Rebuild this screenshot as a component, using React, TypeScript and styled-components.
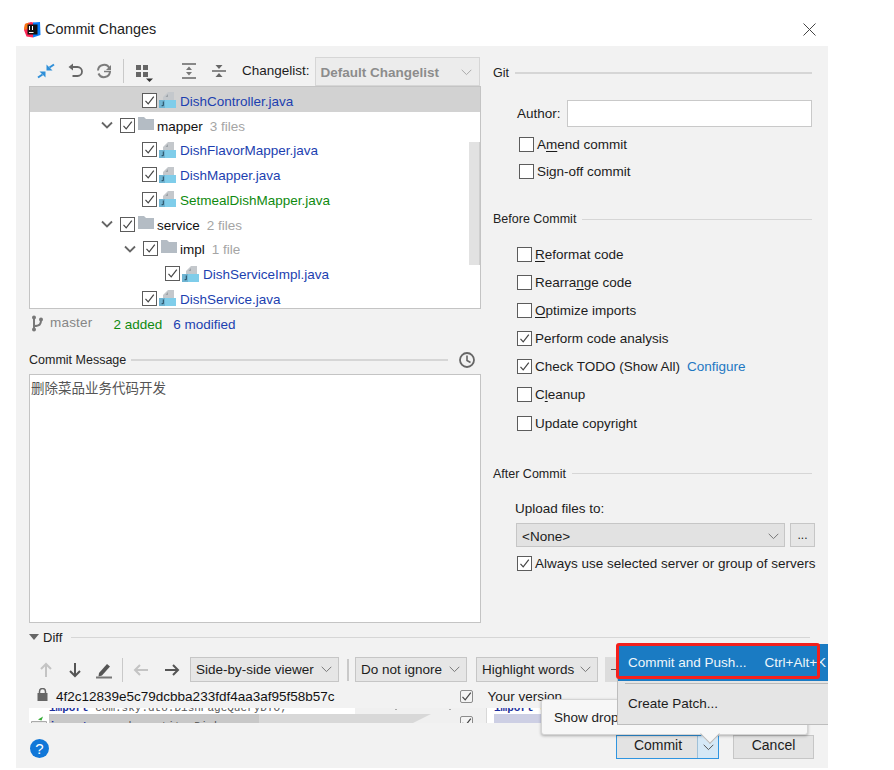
import React from "react";
import styled, { createGlobalStyle } from "styled-components";

const Global = createGlobalStyle`
  html, body { margin: 0; padding: 0; background: #fff; }
  body { font-family: "Liberation Sans", Arial, sans-serif; font-size: 13px; color: #1c1c1c; }
  * { box-sizing: border-box; }
`;

const Page = styled.div`
  width: 894px;
  height: 770px;
  background: #fff;
  padding-left: 16px;
  overflow: hidden;
`;
const Dialog = styled.div`
  position: relative;
  width: 812px;
  height: 768px;
  overflow: hidden;
`;
const TitleBar = styled.div`
  height: 46px;
  display: flex;
  align-items: center;
  padding: 12px 12px 0 8px;
  gap: 4px;
  background: #fff;
`;
const TitleText = styled.div`
  flex: 1;
  font-size: 14.4px;
  color: #222;
`;
const Body = styled.div`
  height: 722px;
  background: #f2f2f2;
  display: flex;
  flex-direction: column;
`;
const Main = styled.div`
  height: 582px;
  display: grid;
  grid-template-columns: 452px 323px;
  column-gap: 12px;
  padding-left: 13px;
`;
const LeftCol = styled.div`
  display: flex;
  flex-direction: column;
  padding-top: 10px;
`;
const ToolBar = styled.div`
  height: 30px;
  display: flex;
  align-items: center;
  padding-left: 8px;
`;
const ToolIcon = styled.svg<{ $ml?: number }>`
  width: 18px;
  height: 18px;
  margin-left: ${(p) => p.$ml ?? 0}px;
  flex: none;
  overflow: visible;
`;
const VSep = styled.div<{ $ml: number; $mr: number; $h?: number; $w?: number }>`
  width: ${(p) => p.$w ?? 1}px;
  height: ${(p) => p.$h ?? 24}px;
  background: #c9c9c9;
  margin: 0 ${(p) => p.$mr}px 0 ${(p) => p.$ml}px;
  flex: none;
`;
const ChangeLabel = styled.span`
  margin-left: 14px;
  margin-top: -2px;
  font-size: 13.5px;
  white-space: nowrap;
`;
const DisabledCombo = styled.div`
  margin-left: 5px;
  width: 165px;
  height: 29px;
  border: 1px solid #d6d6d6;
  background: #ececec;
  display: flex;
  align-items: center;
  justify-content: space-between;
  padding: 2px 7px 0 5px;
  font-weight: bold;
  color: #8c8c8c;
  font-size: 13.5px;
`;
const Tree = styled.div`
  position: relative;
  height: 223px;
  background: #fff;
  border: 1px solid #c4c4c4;
  overflow: hidden;
`;
const Row = styled.div<{ $depth: number; $selected?: boolean }>`
  height: 24.75px;
  display: flex;
  align-items: center;
  padding: 2px 0 0 ${(p) => p.$depth}px;
  background: ${(p) => (p.$selected ? "#d2d2d2" : "transparent")};
  font-size: 13.5px;
  white-space: nowrap;
`;
const Chevron = styled.svg`
  width: 12px;
  height: 8px;
  margin-right: 7px;
  flex: none;
`;
const Box = styled.span`
  width: 15px;
  height: 15px;
  border: 1px solid #5c5c5c;
  background: #fff;
  display: inline-flex;
  align-items: center;
  justify-content: center;
  flex: none;
`;
const FileName = styled.span<{ $color: string }>`
  color: ${(p) => p.$color};
  margin-left: 4px;
  margin-top: 2px;
`;
const FolderName = styled.span`
  color: #111;
  margin-left: 3px;
  margin-top: 2px;
`;
const Count = styled.span`
  color: #a5a5a5;
  margin-left: 7px;
  margin-top: 2px;
`;
const Scroll = styled.div`
  position: absolute;
  right: 0;
  top: 55px;
  width: 11px;
  height: 123px;
  background: #e2e2e2;
  border-right: 1px solid #cfcfcf;
`;
const StatusRow = styled.div`
  height: 31px;
  display: flex;
  align-items: center;
  padding-left: 2px;
  font-size: 13.5px;
`;
const Branch = styled.span`
  color: #868686;
  margin-left: 6px;
  margin-top: -4px;
  letter-spacing: 0.2px;
`;
const Added = styled.span`
  color: #0f8a0f;
  margin-left: 21px;
`;
const Modified = styled.span`
  color: #1c3fb0;
  margin-left: 11px;
`;
const SectionHead = styled.div`
  display: flex;
  align-items: center;
  gap: 6px;
  font-size: 12.5px;
  color: #222;
`;
const RightHead = styled(SectionHead)<{ $mt?: number }>`
  margin-top: ${(p) => p.$mt ?? 0}px;
  padding-right: 4px;
`;
const Line = styled.div<{ $c?: string; $h?: number }>`
  flex: 1;
  height: ${(p) => p.$h ?? 1}px;
  background: ${(p) => p.$c ?? "#d6d6d6"};
`;
const MessageHead = styled(SectionHead)`
  margin-top: 10px;
  height: 19px;
  gap: 5px;
  padding-right: 5px;
`;
const MessageBox = styled.div`
  margin-top: 5px;
  height: 249px;
  background: #fff;
  border: 1px solid #c4c4c4;
  padding: 0 0 0 1px;
  font-family: "Noto Sans CJK SC", "Liberation Serif", serif;
  font-size: 13.5px;
  line-height: 24px;
  color: #555;
`;
const RightCol = styled.div`
  display: flex;
  flex-direction: column;
  padding-top: 20px;
`;
const Author = styled.div`
  display: flex;
  align-items: center;
  gap: 6px;
  margin: 20px 4px 0 24px;
  height: 27px;
  font-size: 13.5px;
`;
const AuthorInput = styled.div`
  flex: 1;
  height: 27px;
  background: #fff;
  border: 1px solid #c9c9c9;
`;
const CheckGroup = styled.div<{ $gap: number; $mt: number; $pl: number }>`
  display: flex;
  flex-direction: column;
  gap: ${(p) => p.$gap}px;
  margin-top: ${(p) => p.$mt}px;
  padding-left: ${(p) => p.$pl}px;
`;
const CheckRow = styled.div`
  height: 15px;
  display: flex;
  align-items: center;
  gap: 3px;
  font-size: 13.5px;
  white-space: nowrap;
  color: #1c1c1c;
`;
const Link = styled.span`
  color: #1e78c2;
  margin-left: 7px;
`;
const Under = styled.u`
  text-underline-offset: 2px;
`;
const Upload = styled.div`
  margin: 20px 0 0 22px;
  font-size: 13.5px;
  height: 16px;
`;
const SelectRow = styled.div`
  display: flex;
  gap: 5px;
  margin: 6px 0 0 23px;
  height: 24px;
`;
const Select = styled.div`
  width: 269px;
  background: #e2e2e2;
  border: 1px solid #c6c6c6;
  display: flex;
  align-items: center;
  justify-content: space-between;
  padding: 3px 5px 0 5px;
  font-size: 13.5px;
`;
const Dots = styled.div`
  width: 25px;
  background: #e6e6e6;
  border: 1px solid #c6c6c6;
  text-align: center;
  font-size: 12px;
  line-height: 23px;
`;
const DiffArea = styled.div`
  height: 97px;
  padding-left: 13px;
  display: flex;
  flex-direction: column;
`;
const DiffHead = styled(SectionHead)`
  height: 18px;
  margin-right: 18px;
  gap: 9px;
  font-size: 13px;
`;
const DiffTools = styled.div`
  display: flex;
  align-items: center;
  height: 25px;
  margin-top: 11px;
  padding-left: 8px;
`;
const ViewCombo = styled.div<{ $w: number; $ml: number }>`
  width: ${(p) => p.$w}px;
  margin-left: ${(p) => p.$ml}px;
  height: 25px;
  flex: none;
  background: #e6e6e6;
  border: 1px solid #c6c6c6;
  display: flex;
  align-items: center;
  justify-content: space-between;
  padding: 0 6px 0 5px;
  font-size: 13.5px;
  white-space: nowrap;
`;
const MinusButton = styled.div`
  width: 30px;
  height: 25px;
  margin-left: 7px;
  flex: none;
  background: #dcdcdc;
  padding: 12px 0 0 6px;
  &::before {
    content: "";
    display: block;
    width: 8px;
    height: 1px;
    background: #555;
  }
`;
const HashRow = styled.div`
  display: flex;
  align-items: center;
  height: 26px;
  padding: 3px 0 0 8px;
`;
const Hash = styled.span`
  margin-left: 8px;
  font-size: 13.5px;
  color: #111;
`;
const VersionLabel = styled.span`
  margin-left: 15px;
  font-size: 13.5px;
`;
const HashCheck = styled.span`
  margin-left: 125px;
  width: 13px;
  height: 13px;
  border: 1px solid #8c8c8c;
  border-radius: 2px;
  background: #f4f4f4;
  display: inline-flex;
  align-items: center;
  justify-content: center;
  flex: none;
`;
const CodeStrip = styled.div`
  height: 15px;
  overflow: hidden;
  display: grid;
  grid-template-columns: 20px 306px 132px 7px 1fr;
  background: #f2f2f2;
`;
const Gutter = styled.div`
  background: #fff;
  display: flex;
  align-items: flex-end;
`;
const Cell = styled.div<{ $c: string }>`
  background: ${(p) => p.$c};
  font-family: "Liberation Mono", monospace;
  font-size: 11px;
  line-height: 18px;
  overflow: hidden;
  color: #555;
  white-space: nowrap;
`;
const CodeLines = styled.div`
  margin-top: -9px;
  b {
    color: #1c2f9c;
  }
`;
const Connector = styled.div`
  position: relative;
  background: #f0f0f0;
  border-right: 1px solid #d8d8d8;
`;
const StripCheck = styled(HashCheck)`
  position: absolute;
  left: 105px;
  top: 8px;
  margin: 0;
`;
const Footer = styled.div`
  height: 43px;
  display: flex;
  align-items: center;
  padding: 0 14px;
`;
const Help = styled.div`
  width: 19px;
  height: 19px;
  margin-top: 3px;
  border-radius: 50%;
  background: #1177d8;
  color: #fff;
  font-size: 15px;
  text-align: center;
  line-height: 19px;
`;
const FooterButtons = styled.div`
  margin-left: auto;
  display: flex;
  gap: 14px;
  margin-top: 1px;
`;
const SplitButton = styled.div`
  width: 103px;
  height: 24px;
  display: flex;
  background: #e3e3e3;
  border: 1px solid #2f95e0;
  font-size: 14px;
`;
const SplitMain = styled.div`
  flex: 1;
  padding-left: 2px;
  text-align: center;
  line-height: 18px;
`;
const SplitArrow = styled.div`
  width: 21px;
  background: #d5e8f6;
  border-left: 1px solid #9fc0d8;
  display: flex;
  align-items: center;
  justify-content: center;
`;
const Cancel = styled.div`
  width: 81px;
  height: 24px;
  background: #e3e3e3;
  border: 1px solid #c6c6c6;
  text-align: center;
  font-size: 14px;
  line-height: 18px;
`;
const Tooltip = styled.div`
  position: absolute;
  left: 525px;
  top: 699px;
  width: 267px;
  height: 36px;
  background: #f7f7f7;
  border: 1px solid #d4d4d4;
  border-radius: 3px;
  box-shadow: 0 1px 3px rgba(0, 0, 0, 0.3);
  padding: 10px 0 0 12px;
  font-size: 13.5px;
  &::after {
    content: "";
    position: absolute;
    left: 161px;
    bottom: -7px;
    width: 13px;
    height: 13px;
    background: #f7f7f7;
    transform: rotate(45deg);
    border-right: 1px solid #b8b8b8;
    border-bottom: 1px solid #b8b8b8;
  }
`;
const Menu = styled.div`
  position: absolute;
  left: 601px;
  top: 644px;
  width: 240px;
  height: 81px;
  background: #e5e5e5;
  border-left: 1px solid #bdbdbd;
  border-bottom: 1px solid #bdbdbd;
  font-size: 13.5px;
`;
const MenuActive = styled.div`
  height: 37px;
  background: #1a7bc3;
  color: #eef6fb;
  display: flex;
  align-items: center;
  padding-left: 10px;
  white-space: nowrap;
`;
const Shortcut = styled.span`
  margin-left: 18px;
`;
const MenuSep = styled.div`
  height: 1px;
  background: #b9b9b9;
  margin: 2px 0 0 7px;
`;
const MenuItem = styled.div`
  height: 38px;
  display: flex;
  align-items: center;
  padding-left: 10px;
`;
const RedMark = styled.div`
  position: absolute;
  left: 600px;
  top: 643px;
  width: 204px;
  height: 36px;
  border: 3px solid #f4201c;
  border-radius: 3px;
`;

const Check = () => (
  <svg width="11" height="11" viewBox="0 0 11 11">
    <path d="M1.5 5.8 4.2 8.8 9.8 1.6" fill="none" stroke="#444" strokeWidth="1.2" />
  </svg>
);
const CB = ({ on }: { on?: boolean }) => <Box>{on && <Check />}</Box>;

const Down = () => (
  <Chevron viewBox="0 0 12 8">
    <path d="M1 1.500 6 6.500 11 1.500" fill="none" stroke="#666" strokeWidth="1.800" />
  </Chevron>
);
const ComboArrow = ({ c = "#777" }: { c?: string }) => (
  <svg width="11" height="7" viewBox="0 0 11 7">
    <path d="M.7.800 5.500 5.600 10.300.800" fill="none" stroke={c} strokeWidth="1" />
  </svg>
);
const Folder = () => (
  <svg width="16" height="13" viewBox="0 0 16 13" style={{ marginTop: -4, marginLeft: 3, flex: "none" }}>
    <path d="M0 0h6l2 2h8v11H0z" fill="#b4bcc4" />
  </svg>
);
const JavaFile = () => (
  <svg width="17" height="16" viewBox="0 0 17 16" style={{ marginLeft: 2, flex: "none" }}>
    <path d="M9 0h6v8H4V5z" fill="#c4c8cc" />
    <path d="M9 2 6.500 5H9z" fill="#9da3a8" />
    <rect x="0" y="8" width="17" height="8" fill="#7fcdea" />
    <rect x="0" y="8" width="6" height="8" fill="#6fb4d2" />
    <path d="M4.300 9.500v4.200H2.600" fill="none" stroke="#23465a" strokeWidth="1" />
  </svg>
);
const FileRow = ({ depth, name, color, selected }: { depth: number; name: string; color: string; selected?: boolean }) => (
  <Row $depth={depth} $selected={selected}>
    <CB on />
    <JavaFile />
    <FileName $color={color}>{name}</FileName>
  </Row>
);
const FolderRow = ({ depth, name, count }: { depth: number; name: string; count: string }) => (
  <Row $depth={depth}>
    <Down />
    <CB on />
    <Folder />
    <FolderName>{name}</FolderName>
    <Count>{count}</Count>
  </Row>
);

const blue = "#1c3fb0";
const green = "#0f8a0f";

export default function App() {
  return (
    <Page>
      <Global />
      <Dialog>
        <TitleBar>
          <svg width="17" height="17" viewBox="0 0 17 17">
            <path d="M1 3 7 1 11 2 9 16.500 2.500 15.500 0 9z" fill="#fe2857" />
            <path d="M1 3 5 1.500 3 8 0 9z" fill="#f97a12" />
            <path d="M9 1.500 16 1 16.500 14 9 16.500z" fill="#087cfa" />
            <rect x="3.500" y="3.500" width="10" height="10" fill="#111" />
            <rect x="5" y="11" width="4.500" height="1" fill="#fff" />
            <rect x="5" y="5" width="1" height="4" fill="#fff" />
            <rect x="8" y="5" width="1" height="4" fill="#fff" />
          </svg>
          <TitleText>Commit Changes</TitleText>
          <svg width="13" height="13" viewBox="0 0 13 13">
            <path d="M.5.500l12 12M12.500.500l-12 12" stroke="#444" strokeWidth="1" fill="none" />
          </svg>
        </TitleBar>
        <Body>
          <Main>
            <LeftCol>
              <ToolBar>
                <ToolIcon viewBox="0 0 18 18">
                  <path d="M8.500 9.500H2.500L8.500 15.500z" fill="#2f8fd8" />
                  <path d="M5.500 12.500 1 15.500" stroke="#2f8fd8" strokeWidth="2" fill="none" />
                  <path d="M9.500 8.500H15.500L9.500 2.500z" fill="#2f8fd8" />
                  <path d="M12.500 5.500 17 2.500" stroke="#2f8fd8" strokeWidth="2" fill="none" />
                </ToolIcon>
                <ToolIcon $ml={12} viewBox="0 0 18 18">
                  <path d="M1.500 5 6 1.500v7z" fill="#666" />
                  <path d="M5 5h5.500a4.500 4.500 0 0 1 0 9H5.500" stroke="#666" strokeWidth="1.800" fill="none" />
                </ToolIcon>
                <ToolIcon $ml={10} viewBox="0 0 18 18">
                  <path d="M14.500 6.500A6 6 0 0 0 3 8.500" stroke="#7c7c7c" strokeWidth="2" fill="none" />
                  <path d="M3.500 11.500A6 6 0 0 0 15 9.500" stroke="#7c7c7c" strokeWidth="2" fill="none" />
                  <path d="M16 3v5h-5z" fill="#7c7c7c" />
                  <path d="M9 9.500h7" stroke="#7c7c7c" strokeWidth="1.500" />
                </ToolIcon>
                <VSep $ml={10} $mr={10} />
                <ToolIcon viewBox="0 0 18 18">
                  <path d="M2 3h5v5H2zM9 3h5v5H9zM2 10h5v5H2zM9 10h5v5H9z" fill="#666" />
                  <path d="M12 16.500h7l-3.500 3.500z" fill="#333" />
                </ToolIcon>
                <ToolIcon $ml={28} viewBox="0 0 18 18">
                  <path d="M2 2h14M2 16h14" stroke="#666" strokeWidth="1.500" fill="none" />
                  <path d="M9 4.500 12 8H6zM9 13.500 12 10H6z" fill="#777" />
                </ToolIcon>
                <ToolIcon $ml={12} viewBox="0 0 18 18">
                  <path d="M2 9h14" stroke="#666" strokeWidth="1.500" fill="none" />
                  <path d="M9 7 5.500 3h7zM9 11l3.500 4h-7z" fill="#666" />
                </ToolIcon>
                <ChangeLabel>Changelist:</ChangeLabel>
                <DisabledCombo>
                  Default Changelist
                  <ComboArrow c="#aaa" />
                </DisabledCombo>
              </ToolBar>
              <Tree>
                <FileRow depth={112} name="DishController.java" color={blue} selected />
                <FolderRow depth={71} name="mapper" count="3 files" />
                <FileRow depth={112} name="DishFlavorMapper.java" color={blue} />
                <FileRow depth={112} name="DishMapper.java" color={blue} />
                <FileRow depth={112} name="SetmealDishMapper.java" color={green} />
                <FolderRow depth={71} name="service" count="2 files" />
                <FolderRow depth={94} name="impl" count="1 file" />
                <FileRow depth={135} name="DishServiceImpl.java" color={blue} />
                <FileRow depth={112} name="DishService.java" color={blue} />
                <Scroll />
              </Tree>
              <StatusRow>
                <svg width="13" height="17" viewBox="0 0 13 17" style={{ marginTop: -3 }}>
                  <path d="M3 1v15M3 11c6 0 7-2 7-6" stroke="#777" strokeWidth="2" fill="none" />
                  <circle cx="3" cy="2.500" r="2" fill="#777" />
                  <circle cx="3" cy="14.500" r="2" fill="#777" />
                  <circle cx="10" cy="4.500" r="2" fill="#777" />
                </svg>
                <Branch>master</Branch>
                <Added>2 added</Added>
                <Modified>6 modified</Modified>
              </StatusRow>
              <MessageHead>
                Commit Message
                <Line $h={2} />
                <svg width="18" height="18" viewBox="0 0 18 18" style={{ marginLeft: 5 }}>
                  <circle cx="9" cy="9" r="7" stroke="#666" strokeWidth="1.800" fill="none" />
                  <path d="M9 4.500V9.500L12.500 11.500" stroke="#666" strokeWidth="1.600" fill="none" />
                </svg>
              </MessageHead>
              <MessageBox>删除菜品业务代码开发</MessageBox>
            </LeftCol>
            <RightCol>
              <RightHead>
                Git
                <Line $h={2} />
              </RightHead>
              <Author>
                Author:
                <AuthorInput />
              </Author>
              <CheckGroup $gap={12} $mt={10} $pl={26}>
                <CheckRow><CB /> <span>A<Under>m</Under>end commit</span></CheckRow>
                <CheckRow><CB /> <span>Si<Under>g</Under>n-off commit</span></CheckRow>
              </CheckGroup>
              <RightHead $mt={33}>
                Before Commit
                <Line />
              </RightHead>
              <CheckGroup $gap={13.1} $mt={21} $pl={24}>
                <CheckRow><CB /> <span><Under>R</Under>eformat code</span></CheckRow>
                <CheckRow><CB /> <span>Rearra<Under>n</Under>ge code</span></CheckRow>
                <CheckRow><CB /> <span><Under>O</Under>ptimize imports</span></CheckRow>
                <CheckRow><CB on /> <span>Perform code analysis</span></CheckRow>
                <CheckRow><CB on /> <span>Check TODO (Show All)<Link>Configure</Link></span></CheckRow>
                <CheckRow><CB /> <span>C<Under>l</Under>eanup</span></CheckRow>
                <CheckRow><CB /> <span>Update copyright</span></CheckRow>
              </CheckGroup>
              <RightHead $mt={36}>
                After Commit
                <Line />
              </RightHead>
              <Upload>Upload files to:</Upload>
              <SelectRow>
                <Select>
                  &lt;None&gt;
                  <ComboArrow />
                </Select>
                <Dots>...</Dots>
              </SelectRow>
              <CheckGroup $gap={0} $mt={9} $pl={24}>
                <CheckRow><CB on /> <span>Always use selected server or group of servers</span></CheckRow>
              </CheckGroup>
            </RightCol>
          </Main>
          <DiffArea>
            <DiffHead>
              <span>
                <svg width="10" height="6" viewBox="0 0 10 6" style={{ marginRight: 4, marginBottom: 2 }}>
                  <path d="M0 0h10L5 6z" fill="#666" />
                </svg>
                Diff
              </span>
              <Line />
            </DiffHead>
            <DiffTools>
              <ToolIcon viewBox="0 0 18 18">
                <path d="M9 16V3M4 8l5-5 5 5" stroke="#c4c4c4" strokeWidth="2" fill="none" />
              </ToolIcon>
              <ToolIcon $ml={11} viewBox="0 0 18 18">
                <path d="M9 2v13M4 10l5 5 5-5" stroke="#555" strokeWidth="2" fill="none" />
              </ToolIcon>
              <ToolIcon $ml={11} viewBox="0 0 18 18">
                <path d="M4 12 12 3l3 2.500-8 9-3.500 1z" fill="#555" />
                <path d="M1 16.500h16" stroke="#777" strokeWidth="2" />
              </ToolIcon>
              <VSep $ml={9} $mr={9} />
              <ToolIcon viewBox="0 0 18 18">
                <path d="M16 9H3M8 4 3 9l5 5" stroke="#c4c4c4" strokeWidth="2" fill="none" />
              </ToolIcon>
              <ToolIcon $ml={13} viewBox="0 0 18 18">
                <path d="M2 9h13M10 4l5 5-5 5" stroke="#555" strokeWidth="2" fill="none" />
              </ToolIcon>
              <ViewCombo $w={149} $ml={9}>Side-by-side viewer <ComboArrow /></ViewCombo>
              <VSep $ml={8} $mr={6} $h={22} $w={2} />
              <ViewCombo $w={112} $ml={0}>Do not ignore <ComboArrow /></ViewCombo>
              <ViewCombo $w={122} $ml={9}>Highlight words <ComboArrow /></ViewCombo>
              <MinusButton />
            </DiffTools>
            <HashRow>
              <svg width="11" height="13" viewBox="0 0 11 13" style={{ marginTop: -4 }}>
                <rect x="0.500" y="5" width="10" height="8" fill="#666" />
                <path d="M2.500 6V3.500a3 3 0 0 1 6 0V6" stroke="#666" strokeWidth="1.500" fill="none" />
              </svg>
              <Hash>4f2c12839e5c79dcbba233fdf4aa3af95f58b57c</Hash>
              <HashCheck><Check /></HashCheck>
              <VersionLabel>Your version</VersionLabel>
            </HashRow>
            <CodeStrip>
              <Gutter>
                <svg width="20" height="11" viewBox="0 0 20 11">
                  <path d="M2.500 5.500h15v4h-15z" fill="#e8e8e8" stroke="#aaa" />
                  <path d="M9 3.500l5-3-1.500 4z" fill="#3a3" />
                </svg>
              </Gutter>
              <Cell $c="linear-gradient(90deg, #c8c8c8 0 210px, #d8d8d8 210px) 0 6px / 100% 100% no-repeat, #fff">
                <CodeLines>
                  <b>import</b> com.sky.dto.DishPageQueryDTO;
                  <br />
                  <b>import</b> com.sky.entity.Dish;
                </CodeLines>
              </Cell>
              <Connector>
                <svg width="131" height="16" viewBox="0 0 131 16">
                  <path d="M0 6H76L56 16H0z" fill="#d8d8d8" />
                  <path d="M40 1.500h2M94 1.500h2" stroke="#aaa" />
                </svg>
                <StripCheck><Check /></StripCheck>
              </Connector>
              <Cell $c="#fff" />
              <Cell $c="linear-gradient(#cdcfe4, #cdcfe4) 0 6px / 100% 100% no-repeat, #fff">
                <CodeLines>
                  <b>import</b> c
                </CodeLines>
              </Cell>
            </CodeStrip>
          </DiffArea>
          <Footer>
            <Help>?</Help>
            <FooterButtons>
              <SplitButton>
                <SplitMain>Commit</SplitMain>
                <SplitArrow><ComboArrow c="#555" /></SplitArrow>
              </SplitButton>
              <Cancel>Cancel</Cancel>
            </FooterButtons>
          </Footer>
        </Body>
        <Tooltip>Show drop-down menu</Tooltip>
        <Menu>
          <MenuActive>
            Commit and Push...
            <Shortcut>Ctrl+Alt+K</Shortcut>
          </MenuActive>
          <MenuSep />
          <MenuItem>Create Patch...</MenuItem>
        </Menu>
        <RedMark />
      </Dialog>
    </Page>
  );
}
